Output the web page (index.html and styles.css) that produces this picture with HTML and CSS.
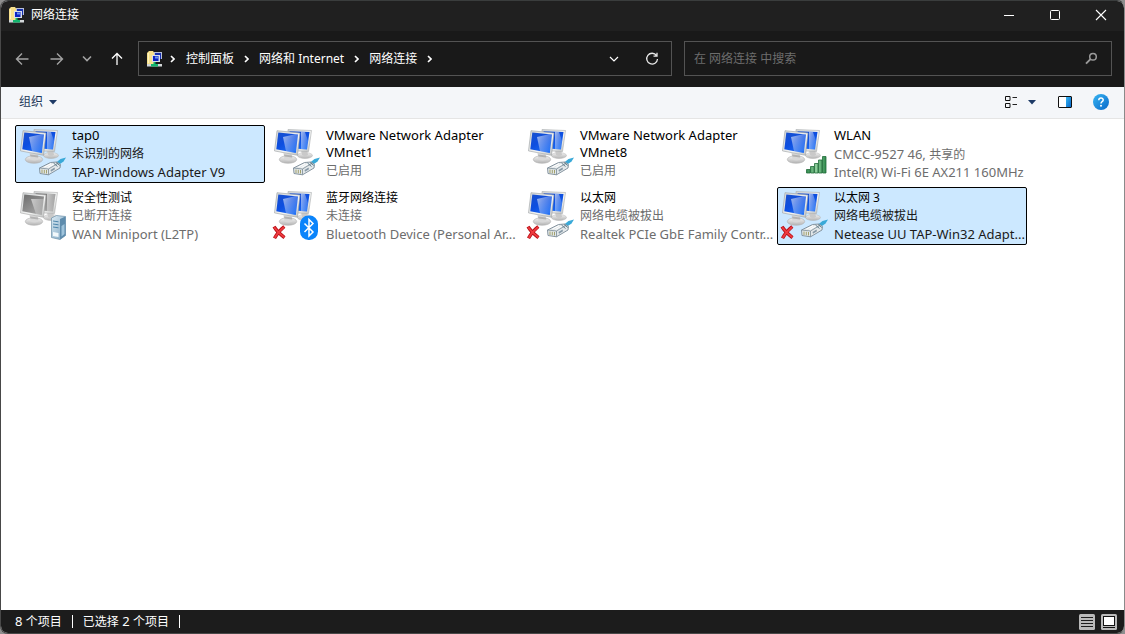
FILE: index.html
```html
<!DOCTYPE html>
<html lang="zh-CN">
<head>
<meta charset="utf-8">
<meta name="viewport" content="width=device-width, initial-scale=1">
<title>网络连接</title>
<link rel="stylesheet" href="styles.css">
</head>
<body>
<svg class="defs" aria-hidden="true">
  <defs>
    <linearGradient id="blue" x1="0" y1="0" x2="0.7" y2="1"><stop offset="0" stop-color="#1a50cc"/><stop offset=".5" stop-color="#0d4ee0"/><stop offset="1" stop-color="#1b6cf5"/></linearGradient>
    <linearGradient id="shine" x1="0" y1="0" x2="1" y2=".6"><stop offset="0" stop-color="#fff" stop-opacity=".6"/><stop offset="1" stop-color="#fff" stop-opacity=".08"/></linearGradient>
    <linearGradient id="gray" x1="0" y1="0" x2="0.7" y2="1"><stop offset="0" stop-color="#6c6c6c"/><stop offset="1" stop-color="#a5a5a5"/></linearGradient>
    <linearGradient id="frame" x1="0" y1="0" x2="1" y2="1"><stop offset="0" stop-color="#d2d5d6"/><stop offset=".6" stop-color="#f3f4f3"/><stop offset="1" stop-color="#bcbebe"/></linearGradient>
    <linearGradient id="stand" x1="0" y1="0" x2="0" y2="1"><stop offset="0" stop-color="#f4f4f4"/><stop offset="1" stop-color="#b4b4b4"/></linearGradient>
    <linearGradient id="green" x1="0" y1="0" x2="1" y2="0"><stop offset="0" stop-color="#2f8a4c"/><stop offset=".5" stop-color="#8fcf9c"/><stop offset="1" stop-color="#2f8a4c"/></linearGradient>
    <linearGradient id="steel" x1="0" y1="0" x2="1" y2="1"><stop offset="0" stop-color="#dcebf4"/><stop offset="1" stop-color="#79a3c0"/></linearGradient>
    <linearGradient id="pane" x1="0" y1="0" x2="1" y2="1"><stop offset="0" stop-color="#37b5f2"/><stop offset="1" stop-color="#0767c9"/></linearGradient>
    <g id="stands">
      <ellipse cx="33" cy="27.500" rx="7.500" ry="3" fill="url(#stand)" stroke="#b5b5b5" stroke-width=".5"/>
      <path d="M29 22l6-1 1 6q-3 2-6 0z" fill="#c9c9c9"/>
    </g>
    <g id="frontstand">
      <ellipse cx="16" cy="31.500" rx="8.700" ry="3.800" fill="url(#stand)" stroke="#b0b0b0" stroke-width=".6"/>
      <path d="M11.500 25l8 1 1 5.500q-4 2-8 0z" fill="#d8d8d8"/>
      <path d="M12 26.500l8 1 .4 2-8-1z" fill="#9a9a9a" opacity=".6"/>
    </g>
    <g id="monitors">
      <use href="#stands"/>
      <path d="M16 1.500L39.500 2.500 36.500 23.500 16 22.500z" fill="url(#frame)" stroke="#a9adaf" stroke-width=".6"/>
      <path d="M17.500 3.300L37.500 4.100 35 21.500 17 20z" fill="url(#blue)"/>
      <path d="M29 3.800L33 4 37 16 35.500 21.500 29 21z" fill="url(#shine)"/>
      <use href="#frontstand"/>
      <path d="M5 2.700L28 5 25.500 27.300 2.500 22.900z" fill="url(#frame)" stroke="#999da0" stroke-width=".6"/>
      <path d="M6.300 4.400L26 6.500 23.800 25.100 4.300 21.300z" fill="url(#blue)"/>
      <path d="M11 9L23 6.200 26 6.500 24 23 20 24.300 14 23.200z" fill="url(#shine)"/>
    </g>
    <g id="monitors-off">
      <use href="#stands"/>
      <path d="M16 1.500L39.500 2.500 36.500 23.500 16 22.500z" fill="url(#frame)" stroke="#b0b0b0" stroke-width=".6"/>
      <path d="M17.500 3.300L37.500 4.100 35 21.500 17 20z" fill="url(#gray)"/>
      <path d="M29 3.800L37.500 4.100 35 21.500 29 21z" fill="url(#shine)"/>
      <use href="#frontstand"/>
      <path d="M5 2.700L28 5 25.500 27.300 2.500 22.900z" fill="url(#frame)" stroke="#a3a3a3" stroke-width=".6"/>
      <path d="M6.300 4.400L26 6.500 23.800 25.100 4.300 21.300z" fill="url(#gray)"/>
      <path d="M13 9L25.700 9 23.800 25.100 18 24z" fill="url(#shine)"/>
    </g>
    <g id="cable" stroke-linejoin="round">
      <path d="M37.500 35L42.500 31 48 29.500 45.500 33.500 40.500 37z" fill="#39a9d8"/>
      <path d="M21.500 40L32.500 34.500 39 34 42.500 36.500 42 40 30.500 46.800 22 45.500z" fill="#e3e8ea" stroke="#7a8a96" stroke-width=".9"/>
      <path d="M21.500 40L30.500 41 40 35.300M30.500 41V46.800" fill="none" stroke="#7a8a96" stroke-width=".8"/>
      <path d="M24 41.500v3.500M26.300 41.800v3.500M28.500 42v3.500" stroke="#a2a06c" stroke-width="1"/>
      <path d="M32.500 42L36.500 39.500 37 41.200 33 43.700z" fill="#8799a6"/>
      <path d="M26.500 39L33 35.800M29.500 39.500L36 36" stroke="#fff" stroke-width="1"/>
      <path d="M35.500 35L39.500 38.500M38 34.500L41.800 37.500" stroke="#587686" stroke-width=".9"/>
    </g>
    <g id="cross">
      <path d="M2 36.700Q5.500 42.500 12.500 47.700M12.300 36.500Q6 41.500 2.500 48.300" fill="none" stroke="#b80f17" stroke-width="3.400"/>
      <path d="M2.200 37.200Q5.800 42.500 12.200 47.300M12 37Q6 42 2.700 47.700" fill="none" stroke="#ee3b3f" stroke-width="1.800"/>
    </g>
    <g id="netfolder">
      <path d="M0 2L2 0H6L7 1.500V13H0z" fill="#f7e08c"/>
      <path d="M1 2h1v10H1z" fill="#fff4bd"/>
      <path d="M7 1h8v7H7z" fill="#b9c0d8"/><path d="M8 2h6v6H8z" fill="#1730ae"/>
      <path d="M5 4h8v7H5z" fill="#d9deea"/><path d="M6 5h5.500v5H6z" fill="#0b22c4"/><path d="M8 5.500h3v2H8z" fill="#6d94f0"/>
      <path d="M0 13h15v2.500H0z" fill="#d3d7d9"/><path d="M4 13h7v2.500H4zM6.500 11h2v3h-2z" fill="#12b56e"/>
    </g>
    <path id="crumb" d="M1 1l3 3-3 3" fill="none" stroke="#fff" stroke-width="1.600"/>
  </defs>
</svg>
<div class="window">
  <header class="titlebar">
    <svg class="app-icon" viewBox="0 0 15 16" aria-hidden="true"><use href="#netfolder"/></svg>
    <h1 class="title">网络连接</h1>
    <div class="captions">
      <button class="caption" aria-label="最小化"><svg width="12" height="12"><path d="M1 6.500h10" stroke="#fff"/></svg></button>
      <button class="caption" aria-label="最大化"><svg width="12" height="12"><rect x="1.500" y="1.500" width="9" height="9" rx="1" fill="none" stroke="#fff"/></svg></button>
      <button class="caption" aria-label="关闭"><svg width="12" height="12"><path d="M1 1l10 10M11 1L1 11" stroke="#fff" stroke-width="1.100"/></svg></button>
    </div>
  </header>
  <nav class="navbar">
    <div class="history">
      <button class="nav-btn" aria-label="后退"><svg width="14" height="14" fill="none" stroke="#a2a2a2" stroke-width="1.400"><path d="M13.500 7H1.500M7 1.500L1.500 7 7 12.500"/></svg></button>
      <button class="nav-btn" aria-label="前进"><svg width="14" height="14" fill="none" stroke="#a2a2a2" stroke-width="1.400"><path d="M.5 7h12M7 1.500L12.500 7 7 12.500"/></svg></button>
      <button class="nav-btn narrow" aria-label="最近的位置"><svg width="10" height="8" fill="none" stroke="#a2a2a2" stroke-width="1.600"><path d="M1 1.500l4 4 4-4"/></svg></button>
      <button class="nav-btn" aria-label="上移"><svg width="12" height="14" fill="none" stroke="#fff" stroke-width="1.300"><path d="M6 13V1.500M1 6.500l5-5 5 5"/></svg></button>
    </div>
    <div class="address">
      <svg class="app-icon" viewBox="0 0 15 16" aria-hidden="true"><use href="#netfolder"/></svg>
      <svg class="sep first" aria-hidden="true"><use href="#crumb"/></svg>
      <button class="crumb">控制面板</button>
      <svg class="sep" aria-hidden="true"><use href="#crumb"/></svg>
      <button class="crumb">网络和 Internet</button>
      <svg class="sep" aria-hidden="true"><use href="#crumb"/></svg>
      <button class="crumb">网络连接</button>
      <svg class="sep" aria-hidden="true"><use href="#crumb"/></svg>
      <div class="address-tools">
        <button class="nav-btn" aria-label="以前的位置"><svg width="10" height="8" fill="none" stroke="#fff" stroke-width="1.200"><path d="M1 2l4 4 4-4"/></svg></button>
        <button class="nav-btn" aria-label="刷新"><svg width="14" height="14" fill="none" stroke="#e8e8e8" stroke-width="1.300"><path d="M11.500 3.500A5.400 5.400 0 1 0 12.500 7M12 .8V4.200H8.500"/></svg></button>
      </div>
    </div>
    <label class="search">
      <input class="search-input" type="text" placeholder="在 网络连接 中搜索" aria-label="搜索">
      <svg width="13" height="13" fill="none" stroke="#9a9a9a" aria-hidden="true"><circle cx="8" cy="4.700" r="3.300" stroke-width="1.500"/><path d="M5.500 7.200L1 11.700" stroke-width="1.900"/></svg>
    </label>
  </nav>
  <div class="commandbar">
    <button class="organize">组织 <svg width="8" height="5" aria-hidden="true"><path d="M0 0h8L4 4.500z" fill="#1d3a66"/></svg></button>
    <div class="view-tools">
      <button class="tool" aria-label="更改视图"><svg width="14" height="14"><path d="M1.500 1.500h4.500v4h-4.500zM1.500 8.500h4.500v4h-4.500z" fill="none" stroke="#111"/><path d="M8.500 2.500H13M8.500 9.500H13" stroke="#222"/></svg></button>
      <button class="tool more" aria-label="更多选项"><svg width="8" height="5"><path d="M0 0h8L4 4.500z" fill="#1d3a66"/></svg></button>
      <button class="tool preview" aria-label="预览窗格"><svg width="14" height="12"><rect x=".5" y=".5" width="13" height="11" rx=".5" fill="#fff" stroke="#111"/><path d="M8 1h5v10H8z" fill="url(#pane)"/></svg></button>
      <button class="tool help" aria-label="帮助"><svg width="16" height="16"><circle cx="8" cy="8" r="8" fill="url(#pane)"/><path d="M5.800 6.200C5.800 3.200 10.300 3.400 10.200 6 10.100 7.800 8 7.600 8 9.500" fill="none" stroke="#fff" stroke-width="1.500"/><circle cx="8" cy="11.700" r="1" fill="#fff"/></svg></button>
    </div>
  </div>
  <main class="content">
    <ul class="connections">
      <li class="item selected">
        <svg class="device" aria-hidden="true"><use href="#monitors"/><use href="#cable"/></svg>
        <div class="info"><p class="name latin">tap0</p><p class="detail">未识别的网络</p><p class="detail latin">TAP-Windows Adapter V9</p></div>
      </li>
      <li class="item">
        <svg class="device" aria-hidden="true"><use href="#monitors"/><use href="#cable"/></svg>
        <div class="info"><p class="name latin">VMware Network Adapter VMnet1</p><p class="detail">已启用</p></div>
      </li>
      <li class="item">
        <svg class="device" aria-hidden="true"><use href="#monitors"/><use href="#cable"/></svg>
        <div class="info"><p class="name latin">VMware Network Adapter VMnet8</p><p class="detail">已启用</p></div>
      </li>
      <li class="item">
        <svg class="device" aria-hidden="true"><use href="#monitors"/><g fill="url(#green)" stroke="#1f6b38" stroke-width=".8"><path d="M26.500 41.500h3.500v3.500h-3.500zM30.500 38.500h3.500V45h-3.500zM34.500 35.500H38V45h-3.500zM38.500 32H42v13h-3.500zM42.500 28.500H46V45h-3.500z"/></g></svg>
        <div class="info"><p class="name latin">WLAN</p><p class="detail"><span class="latin">CMCC-9527 46, </span>共享的</p><p class="detail latin">Intel(R) Wi-Fi 6E AX211 160MHz</p></div>
      </li>
      <li class="item">
        <svg class="device" aria-hidden="true"><use href="#monitors-off"/><path d="M33.500 28L38.500 25.500 47.500 26.500V45.500L42 49.500 33.500 47.500z" fill="url(#steel)" stroke="#6b8fa8" stroke-width=".7"/><path d="M42 29L47.500 26.500V45.500L42 49.500z" fill="#5e8cad"/><path d="M43.500 36l3-2v10l-3 2.500z" fill="#9fc4dc"/><path d="M35 31l5.500.8M35 34l5.500.8M35 37l5.500.8" stroke="#4f86ac"/><path d="M35 42l5.500 1v4L35 46z" fill="#f2f8fb"/></svg>
        <div class="info"><p class="name">安全性测试</p><p class="detail">已断开连接</p><p class="detail latin">WAN Miniport (L2TP)</p></div>
      </li>
      <li class="item">
        <svg class="device" aria-hidden="true"><use href="#monitors"/><use href="#cross"/><rect x="28" y="25.500" width="18" height="24.500" rx="8.500" fill="#0a84fb"/><path d="M32.500 33.500L41 42 37 46V29.500L41 33.500 32.500 42" fill="none" stroke="#fff" stroke-width="1.500"/></svg>
        <div class="info"><p class="name">蓝牙网络连接</p><p class="detail">未连接</p><p class="detail latin">Bluetooth Device (Personal Ar...</p></div>
      </li>
      <li class="item">
        <svg class="device" aria-hidden="true"><use href="#monitors"/><use href="#cable"/><use href="#cross"/></svg>
        <div class="info"><p class="name">以太网</p><p class="detail">网络电缆被拔出</p><p class="detail latin">Realtek PCIe GbE Family Contr...</p></div>
      </li>
      <li class="item selected">
        <svg class="device" aria-hidden="true"><use href="#monitors"/><use href="#cable"/><use href="#cross"/></svg>
        <div class="info"><p class="name">以太网 3</p><p class="detail">网络电缆被拔出</p><p class="detail latin">Netease UU TAP-Win32 Adapt...</p></div>
      </li>
    </ul>
  </main>
  <footer class="statusbar">
    <span class="status"><span class="latin">8 </span>个项目</span>
    <span class="status">已选择<span class="latin"> 2 </span>个项目</span>
    <div class="layouts">
      <button class="layout" aria-label="详细信息"><svg width="16" height="16"><rect width="16" height="16" rx="1.500" fill="#b9b9b9"/><path d="M2 3.500h12M2 6.500h12M2 9.500h12M2 12.500h12" stroke="#1c1c1c"/></svg></button>
      <button class="layout" aria-label="大图标"><svg width="16" height="16"><rect width="16" height="16" rx="1.500" fill="#b9b9b9"/><rect x="2.500" y="2.500" width="11" height="9" fill="#fff" stroke="#111"/><path d="M2 13.500h12" stroke="#111"/></svg></button>
    </div>
  </footer>
</div>
</body>
</html>
```
FILE: styles.css
```css
* { box-sizing: border-box; }
body {
  margin: 0;
  background: #8f8f8f;
  font: 12px/18px "Noto Sans", "Noto Sans CJK SC", sans-serif;
}
button {
  display: flex;
  align-items: center;
  justify-content: center;
  margin: 0;
  padding: 0;
  border: 0;
  background: none;
  color: inherit;
  font: inherit;
}
svg { display: block; flex: none; }
.defs { position: absolute; width: 0; height: 0; }
.window {
  display: flex;
  flex-direction: column;
  min-height: 100vh;
  border: 1px solid #484848;
  border-top-color: #3a3d3d;
  border-right-color: #8a8a8a;
  border-radius: 8px;
  overflow: hidden;
  background: #fff;
}
.latin { font-size: 13px; }
.titlebar {
  display: flex;
  align-items: center;
  height: 30px;
  padding: 0 0 2px 8px;
  background: #202020;
  color: #fff;
}
.app-icon { width: 15px; height: 16px; }
.title { margin: 0 0 0 7px; font-size: 12px; font-weight: 400; }
.captions { display: flex; margin-left: auto; }
.caption { width: 46px; height: 28px; }
.navbar {
  display: flex;
  align-items: center;
  padding: 10px 12px 11px 4px;
  background: #191919;
  color: #fff;
}
.history { display: flex; flex: none; gap: 1px; width: 133px; }
.nav-btn { flex: none; width: 34px; height: 32px; }
.narrow { width: 24px; }
.address {
  display: flex;
  flex: 524 1 0;
  align-items: center;
  height: 35px;
  margin-right: 12px;
  padding-left: 8px;
  border: 1px solid #535353;
}
.sep { width: 5px; height: 8px; margin: 0 10px; }
.first { margin: 0 11px 0 8px; }
.address-tools { display: flex; gap: 4px; margin-left: auto; padding-right: 2px; }
.search {
  display: flex;
  flex: 404 1 0;
  align-items: center;
  height: 35px;
  padding: 0 13px 0 9px;
  border: 1px solid #535353;
}
.search-input {
  flex: 1;
  min-width: 0;
  padding: 0;
  border: 0;
  outline: 0;
  background: none;
  color: #fff;
  font: inherit;
}
.search-input::placeholder { color: #6d6d6d; opacity: 1; }
.commandbar {
  display: flex;
  align-items: center;
  justify-content: space-between;
  height: 32px;
  padding: 0 15px 1px 18px;
  border-bottom: 1px solid #e5e5e5;
  background: #f4f6f9;
}
.organize { gap: 6px; color: #1e395b; }
.view-tools { display: flex; align-items: center; }
.more { margin-left: 10px; }
.preview { margin-left: 22px; }
.help { margin-left: 21px; }
.content { flex: 1; padding: 6px 14px; }
.connections {
  display: grid;
  grid-template-columns: repeat(auto-fill, 250px);
  gap: 4px;
  margin: 0;
  padding: 0;
  list-style: none;
}
.item {
  display: flex;
  gap: 6px;
  min-height: 58px;
  padding: 1px 0 1px 2px;
  border: 1px solid transparent;
  border-radius: 2px;
}
.selected { border-color: #000; background: #cce8ff; }
.device { width: 48px; height: 52px; margin-top: 1px; }
.info { min-width: 0; flex: 1; color: #6d6d6d; }
.name, .detail { margin: 0; }
.name { margin-bottom: 1px; color: #000; line-height: 17px; }
.detail { height: 18px; white-space: nowrap; }
.selected .detail { color: #1a1a1a; }
.statusbar {
  display: flex;
  align-items: center;
  height: 23px;
  padding: 0 7px 0 14px;
  background: #1c1c1c;
  color: #fff;
}
.status { line-height: 12px; padding-right: 10px; margin-right: 10px; border-right: 1px solid #fff; }
.layouts { display: flex; gap: 6px; margin-left: auto; }
```
